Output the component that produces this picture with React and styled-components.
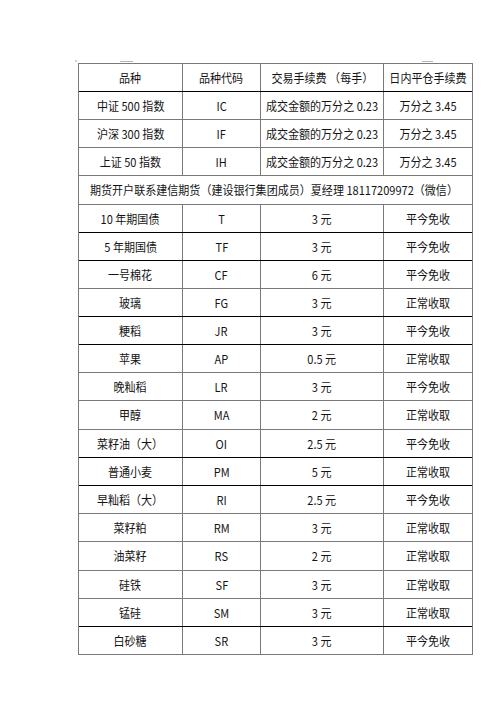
import React from "react";
import styled, { createGlobalStyle } from "styled-components";

const Global = createGlobalStyle`
  html, body { margin: 0; padding: 0; background: #ffffff; }
  body {
    font-family: "Noto Sans CJK SC", "Noto Sans", sans-serif;
    color: #141414;
  }
`;

const Page = styled.div`
  position: relative;
  width: 496px;
  height: 702px;
  padding: 63px 0 0 78px;
  box-sizing: border-box;
  background: #fff;
`;

const Mark = styled.span`
  position: absolute;
  left: ${(p) => p.$x}px;
  top: ${(p) => p.$y}px;
  width: ${(p) => p.$w}px;
  height: ${(p) => p.$h}px;
  background: ${(p) => p.$c || "#c8c8c8"};
`;

const Table = styled.div`
  width: 395px;
  box-sizing: border-box;
  border: 1px solid #7a7a7a;
  border-bottom: none;
  font-size: 12px;
`;

const Row = styled.div`
  display: grid;
  grid-template-columns: 104px 78px 123px 88px;
  height: ${(p) => (p.$tall ? 29 : 28)}px;
  box-sizing: border-box;
  border-bottom: 1px solid ${(p) => (p.$strong ? "#000000" : "#7a7a7a")};
`;

const Cell = styled.div`
  display: flex;
  align-items: center;
  justify-content: center;
  white-space: nowrap;
  box-sizing: border-box;
  border-right: ${(p) => (p.$last ? "none" : "1px solid #7a7a7a")};
  overflow: visible;
`;

const WideCell = styled.div`
  grid-column: 1 / -1;
  display: flex;
  align-items: center;
  justify-content: center;
  white-space: nowrap;
  padding-right: 4px;
`;

const Text = styled.span`
  display: inline-block;
  transform: scaleX(0.92);
  transform-origin: center;
  line-height: 1;
`;

const header = ["品种", "品种代码", "交易手续费 （每手）", "日内平仓手续费"];

const indexRows = [
  ["中证 500 指数", "IC", "成交金额的万分之 0.23", "万分之 3.45"],
  ["沪深 300 指数", "IF", "成交金额的万分之 0.23", "万分之 3.45"],
  ["上证 50 指数", "IH", "成交金额的万分之 0.23", "万分之 3.45"],
];

const rows = [
  { c: ["10 年期国债", "T", "3 元", "平今免收"], strong: true },
  { c: ["5 年期国债", "TF", "3 元", "平今免收"], strong: true },
  { c: ["一号棉花", "CF", "6 元", "平今免收"] },
  { c: ["玻璃", "FG", "3 元", "正常收取"], strong: true },
  { c: ["粳稻", "JR", "3 元", "平今免收"], strong: true },
  { c: ["苹果", "AP", "0.5 元", "正常收取"] },
  { c: ["晚籼稻", "LR", "3 元", "平今免收"] },
  { c: ["甲醇", "MA", "2 元", "正常收取"], tall: true },
  { c: ["菜籽油（大）", "OI", "2.5 元", "平今免收"], strong: true },
  { c: ["普通小麦", "PM", "5 元", "正常收取"], strong: true },
  { c: ["早籼稻（大）", "RI", "2.5 元", "平今免收"] },
  { c: ["菜籽粕", "RM", "3 元", "正常收取"] },
  { c: ["油菜籽", "RS", "2 元", "正常收取"], tall: true },
  { c: ["硅铁", "SF", "3 元", "正常收取"] },
  { c: ["锰硅", "SM", "3 元", "正常收取"], strong: true },
  { c: ["白砂糖", "SR", "3 元", "平今免收"] },
];

function Cells({ values }) {
  return values.map((v, i) => (
    <Cell key={i} $last={i === values.length - 1}>
      <Text>{v}</Text>
    </Cell>
  ));
}

export default function App() {
  return (
    <>
      <Global />
      <Page>
        <Mark $x={75} $y={60} $w={2} $h={2} $c="#d0d0d0" />
        <Mark $x={120} $y={61} $w={13} $h={1} $c="#b5b5b5" />
        <Mark $x={422} $y={61} $w={11} $h={1} $c="#b5b5b5" />
        <Table>
          <Row $strong>
            <Cells values={header} />
          </Row>
          {indexRows.map((r, i) => (
            <Row key={i}>
              <Cells values={r} />
            </Row>
          ))}
          <Row $tall>
            <WideCell>
              <Text>期货开户联系建信期货（建设银行集团成员）夏经理 18117209972（微信）</Text>
            </WideCell>
          </Row>
          {rows.map((r, i) => (
            <Row key={i} $strong={r.strong} $tall={r.tall}>
              <Cells values={r.c} />
            </Row>
          ))}
        </Table>
      </Page>
    </>
  );
}
